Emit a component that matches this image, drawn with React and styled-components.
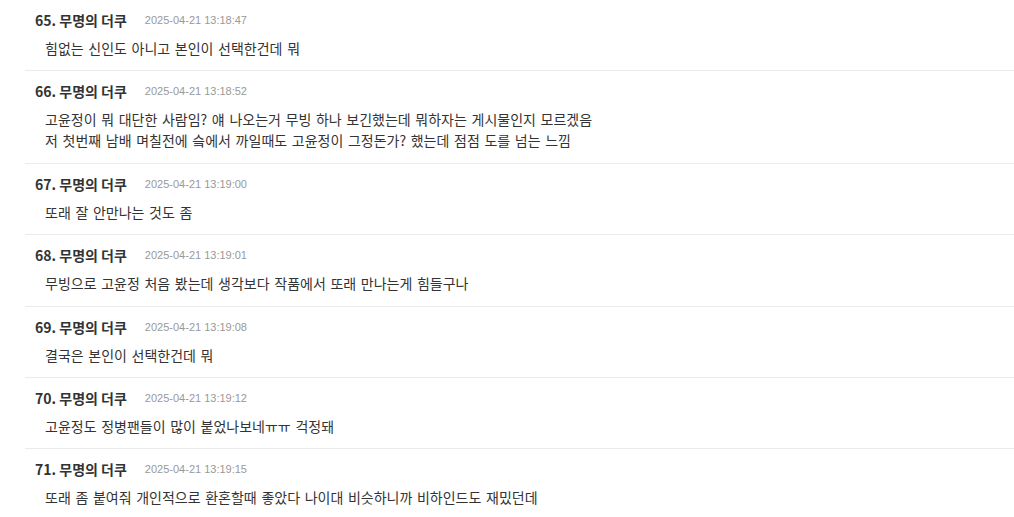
import React from "react";
import styled, { createGlobalStyle } from "styled-components";

const GlobalStyle = createGlobalStyle`
  html, body {
    margin: 0;
    padding: 0;
    background: #fff;
  }
`;

const List = styled.div`
  display: flex;
  flex-direction: column;
  margin-left: 25px;
  font-family: "Noto Sans CJK KR", "Liberation Sans", sans-serif;
`;

const Item = styled.div`
  padding: 10px 10px 12.4px;
  border-bottom: 1px solid #ebebeb;
  &:last-child {
    border-bottom: none;
  }
`;

const Header = styled.div`
  display: flex;
  align-items: center;
  height: 20px;
  margin-bottom: 7px;
`;

const Name = styled.span`
  font-size: 14px;
  font-weight: 700;
  color: #333;
  line-height: 20px;
`;

const Date = styled.span`
  margin-left: 18px;
  font-family: "Liberation Sans", sans-serif;
  font-size: 11px;
  color: #999;
  line-height: 20px;
`;

const Body = styled.div`
  padding-left: 10px;
  padding-top: 1px;
  margin-bottom: -1px;
  font-size: 14px;
  line-height: 21px;
  color: #333;
  word-spacing: 1.5px;
`;

const comments = [
  { no: 65, time: "2025-04-21 13:18:47", lines: ["힘없는 신인도 아니고 본인이 선택한건데 뭐"] },
  {
    no: 66,
    time: "2025-04-21 13:18:52",
    lines: [
      "고윤정이 뭐 대단한 사람임? 얘 나오는거 무빙 하나 보긴했는데 뭐하자는 게시물인지 모르겠음",
      "저 첫번째 남배 며칠전에 슼에서 까일때도 고윤정이 그정돈가? 했는데 점점 도를 넘는 느낌",
    ],
  },
  { no: 67, time: "2025-04-21 13:19:00", lines: ["또래 잘 안만나는 것도 좀"] },
  { no: 68, time: "2025-04-21 13:19:01", lines: ["무빙으로 고윤정 처음 봤는데 생각보다 작품에서 또래 만나는게 힘들구나"] },
  { no: 69, time: "2025-04-21 13:19:08", lines: ["결국은 본인이 선택한건데 뭐"] },
  { no: 70, time: "2025-04-21 13:19:12", lines: ["고윤정도 정병팬들이 많이 붙었나보네ㅠㅠ 걱정돼"] },
  { no: 71, time: "2025-04-21 13:19:15", lines: ["또래 좀 붙여줘 개인적으로 환혼할때 좋았다 나이대 비슷하니까 비하인드도 재밌던데"] },
];

const App = () => {
  return (
    <>
      <GlobalStyle />
      <List>
        {comments.map((c) => (
          <Item key={c.no}>
            <Header>
              <Name>{c.no}. 무명의 더쿠</Name>
              <Date>{c.time}</Date>
            </Header>
            <Body>
              {c.lines.map((l, i) => (
                <div key={i}>{l}</div>
              ))}
            </Body>
          </Item>
        ))}
      </List>
    </>
  );
};

export default App;
